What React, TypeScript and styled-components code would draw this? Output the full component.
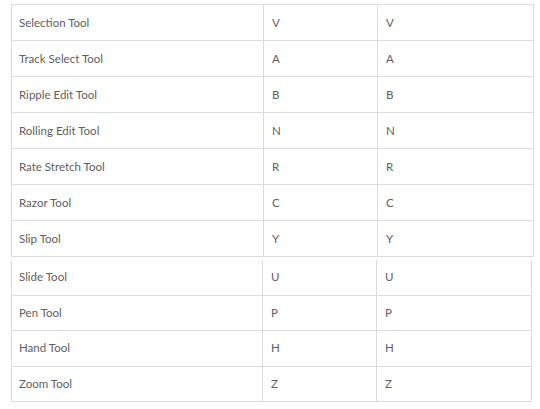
import React from "react";
import styled, { createGlobalStyle } from "styled-components";

const Global = createGlobalStyle`
  html, body { margin: 0; padding: 0; background: #ffffff; }
  body { font-family: Lato, "Noto Sans", "Liberation Sans", sans-serif; }
`;

const Page = styled.div`
  display: flex;
  flex-direction: column;
  padding: 4px 0 0 11px;
  width: 540px;
  height: 409px;
  box-sizing: border-box;
`;

const Table = styled.div<{ $cols: string; $top: boolean; $gap: number }>`
  display: grid;
  grid-template-columns: ${(p) => p.$cols};
  width: max-content;
  border-left: 1px solid #dcdcdc;
  border-top: ${(p) => (p.$top ? "1px solid #dcdcdc" : "none")};
  margin-top: ${(p) => p.$gap}px;
`;

const Cell = styled.div<{ $h: number }>`
  box-sizing: border-box;
  height: ${(p) => p.$h}px;
  border-right: 1px solid #dcdcdc;
  border-bottom: 1px solid #dcdcdc;
  display: flex;
  align-items: center;
  padding: 0 0 1px 7px;
  font-size: 11.5px;
  color: #606060;
  white-space: nowrap;
`;

const KeyCell = styled(Cell)`
  padding-left: 8px;
`;

const top: [string, string][] = [
  ["Selection Tool", "V"],
  ["Track Select Tool", "A"],
  ["Ripple Edit Tool", "B"],
  ["Rolling Edit Tool", "N"],
  ["Rate Stretch Tool", "R"],
  ["Razor Tool", "C"],
  ["Slip Tool", "Y"],
];

const bottom: [string, string][] = [
  ["Slide Tool", "U"],
  ["Pen Tool", "P"],
  ["Hand Tool", "H"],
  ["Zoom Tool", "Z"],
];

const Rows = ({ rows, h }: { rows: [string, string][]; h: number }) => (
  <>
    {rows.map(([name, key]) => (
      <React.Fragment key={name}>
        <Cell $h={h}>{name}</Cell>
        <KeyCell $h={h}>{key}</KeyCell>
        <KeyCell $h={h}>{key}</KeyCell>
      </React.Fragment>
    ))}
  </>
);

export default function App() {
  return (
    <>
      <Global />
      <Page>
        <Table $cols="252px 114px 156px" $top={true} $gap={0}>
          <Rows rows={top} h={36} />
        </Table>
        <Table $cols="251px 114px 155px" $top={false} $gap={3}>
          <Rows rows={bottom} h={35.5} />
        </Table>
      </Page>
    </>
  );
}
